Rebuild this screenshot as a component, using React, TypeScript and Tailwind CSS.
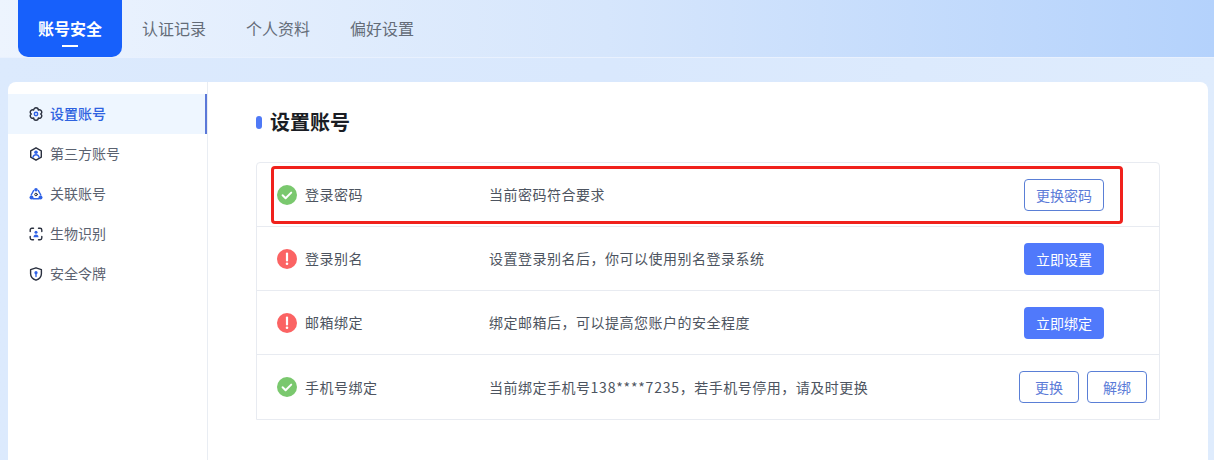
const font = { fontFamily: '"Noto Sans CJK SC", "Noto Sans", sans-serif' };
const C = "\uFF0C";

function NavIcon({ kind }: { kind: number }) {
  const d = "#2b3140";
  const b = "#2f62e6";
  return (
    <svg width="14" height="14" viewBox="0 0 14 14" fill="none" strokeWidth="1.4" strokeLinecap="round" strokeLinejoin="round">
      {kind === 0 && (
        <>
          <path d="M9.300 3.020A2.300 2.300 0 0 1 11.600 7A2.300 2.300 0 0 1 9.300 10.980A2.300 2.300 0 0 1 4.700 10.980A2.300 2.300 0 0 1 2.400 7A2.300 2.300 0 0 1 4.700 3.020A2.300 2.300 0 0 1 9.300 3.020z" stroke={d} />
          <circle cx="7" cy="7" r="1.700" stroke={b} />
        </>
      )}
      {kind === 1 && (
        <>
          <path d="M7 .8l5.300 3v6.400L7 13.200 1.700 10.200V3.800z" stroke={d} />
          <circle cx="7" cy="5.200" r="1.800" fill={b} />
          <path d="M3.900 10.400c.5-1.800 1.700-2.700 3.100-2.700s2.600.9 3.100 2.700" stroke={b} />
        </>
      )}
      {kind === 2 && (
        <>
          <path d="M4.600 3.600L2.200 8M9.400 3.600L11.800 8M4 11.800h6" stroke={b} />
          <circle cx="7" cy="2.800" r="1.800" fill={b} />
          <circle cx="2.500" cy="10.500" r="2" fill={b} />
          <circle cx="11.500" cy="10.500" r="2" fill={b} />
          <circle cx="7" cy="7.500" r="1.300" stroke={d} strokeWidth="1" />
        </>
      )}
      {kind === 3 && (
        <>
          <path d="M1.200 4.500V2.900a1.700 1.700 0 0 1 1.700-1.700h1.600M9.500 1.200h1.600a1.700 1.700 0 0 1 1.700 1.700v1.600M12.800 9.500v1.600a1.700 1.700 0 0 1-1.700 1.700H9.500M4.500 12.800H2.900a1.700 1.700 0 0 1-1.700-1.700V9.500" stroke={d} />
          <circle cx="7" cy="5.200" r="1.500" fill={b} />
          <path d="M4.500 10.200c0-1.600 1-2.600 2.500-2.600s2.500 1 2.500 2.600z" fill={b} />
        </>
      )}
      {kind === 4 && (
        <>
          <path d="M7 .8l5.400 1.900v4c0 3-2.200 5.300-5.400 6.500C3.800 12 1.600 9.700 1.600 6.700v-4z" stroke={d} />
          <circle cx="7" cy="5.700" r="1.600" fill={b} />
          <path d="M7 6.500v3" stroke={b} />
        </>
      )}
    </svg>
  );
}

function StatusIcon({ ok }: { ok: boolean }) {
  return ok ? (
    <svg width="20" height="20" viewBox="0 0 20 20">
      <circle cx="10" cy="10" r="10" fill="#7ac86e" />
      <path d="M5.600 10.300l3 2.900 5.600-5.600" fill="none" stroke="#fff" strokeWidth="2" strokeLinecap="round" strokeLinejoin="round" />
    </svg>
  ) : (
    <svg width="20" height="20" viewBox="0 0 20 20">
      <circle cx="10" cy="10" r="10" fill="#fb6363" />
      <path d="M10 4.600v6.800" stroke="#fff" strokeWidth="2.200" strokeLinecap="round" />
      <circle cx="10" cy="14.800" r="1.300" fill="#fff" />
    </svg>
  );
}

function OutlineButton({ label, w }: { label: string; w: string }) {
  return (
    <button className={`h-8 ${w} rounded border border-[#5a7fd6] bg-white text-[14px] leading-none text-[#5b7bd8]`}>
      {label}
    </button>
  );
}

function FillButton({ label }: { label: string }) {
  return <button className="h-8 w-20 rounded bg-[#5079fb] text-[14px] leading-none text-white">{label}</button>;
}

const navItems = ["设置账号", "第三方账号", "关联账号", "生物识别", "安全令牌"];
const tabs = ["认证记录", "个人资料", "偏好设置"];

const rows = [
  { ok: true, name: "登录密码", desc: "当前密码符合要求", action: <OutlineButton label="更换密码" w="w-20" />, cls: "h-[63px] pr-[55px]" },
  { ok: false, name: "登录别名", desc: `设置登录别名后${C}你可以使用别名登录系统`, action: <FillButton label="立即设置" />, cls: "h-[64px] pr-[55px] border-t" },
  { ok: false, name: "邮箱绑定", desc: `绑定邮箱后${C}可以提高您账户的安全程度`, action: <FillButton label="立即绑定" />, cls: "h-[64px] pr-[55px] border-t" },
  {
    ok: true,
    name: "手机号绑定",
    desc: (
      <>
        当前绑定手机号<span className="tracking-[0.8px]">138****7235</span>
        {`${C}若手机号停用${C}请及时更换`}
      </>
    ),
    action: (
      <div className="flex gap-2">
        <OutlineButton label="更换" w="w-[60px]" />
        <OutlineButton label="解绑" w="w-[60px]" />
      </div>
    ),
    cls: "h-[65px] pr-[12px] border-t",
  },
];

export default function App() {
  return (
    <div className="h-[460px] w-[1214px] overflow-hidden bg-gradient-to-r from-[#dceafd] via-[#d9e8fd] to-[#dfecfd]" style={font}>
      <header className="flex h-[58px] items-start border-b border-[#e9f1fe] bg-gradient-to-r from-[#edf4fe] via-[#d6e6fc] to-[#b4d2fc] pl-[18px]">
        <div className="flex h-[57px] w-[104px] flex-col items-center rounded-b-[10px] bg-[#1760fb] pt-[16px] text-[16px] font-bold leading-[24px] text-white">
          账号安全
          <span className="mt-[5px] h-[2px] w-4 bg-white" />
        </div>
        {tabs.map((t) => (
          <div key={t} className="w-[104px] pt-[16px] text-center text-[16px] leading-[24px] text-[#646c78]">
            {t}
          </div>
        ))}
      </header>

      <main className="ml-2 mr-[6px] mt-[24px] flex h-[400px] rounded-t-lg bg-white">
        <aside className="w-[200px] shrink-0 border-r border-[#e9edf3] pt-3">
          {navItems.map((n, i) => (
            <div
              key={n}
              className={`flex h-10 items-center pl-[21px] text-[14px] ${
                i === 0 ? "border-r-2 border-[#5b78d8] bg-[#eef6ff] font-medium text-[#2e62e0]" : "text-[#5b6270]"
              }`}
            >
              <NavIcon kind={i} />
              <span className="ml-[7px] pb-[2px]">{n}</span>
            </div>
          ))}
        </aside>

        <section className="flex-1 px-[48px]">
          <div className="flex h-[80px] items-center">
            <span className="h-[13px] w-[6px] rounded-full bg-[#4f79f6]" />
            <h1 className="ml-2 text-[20px] font-bold leading-none text-[#1a1d24]">设置账号</h1>
          </div>
          <div className="relative w-[904px] rounded-t border border-[#e8ebf1]">
            {rows.map((r) => (
              <div key={r.name} className={`flex items-center border-[#e8ebf1] pl-5 ${r.cls}`}>
                <StatusIcon ok={r.ok} />
                <span className="ml-2 w-[184px] text-[14px] tracking-[0.5px] text-[#4d5460]">{r.name}</span>
                <span className="flex-1 text-[14px] tracking-[0.5px] text-[#4d5460]">{r.desc}</span>
                {r.action}
              </div>
            ))}
            <div className="absolute left-[14px] top-[3px] h-[58px] w-[852px] rounded-[4px] border-[3px] border-[#f0211c]" />
          </div>
        </section>
      </main>
    </div>
  );
}
